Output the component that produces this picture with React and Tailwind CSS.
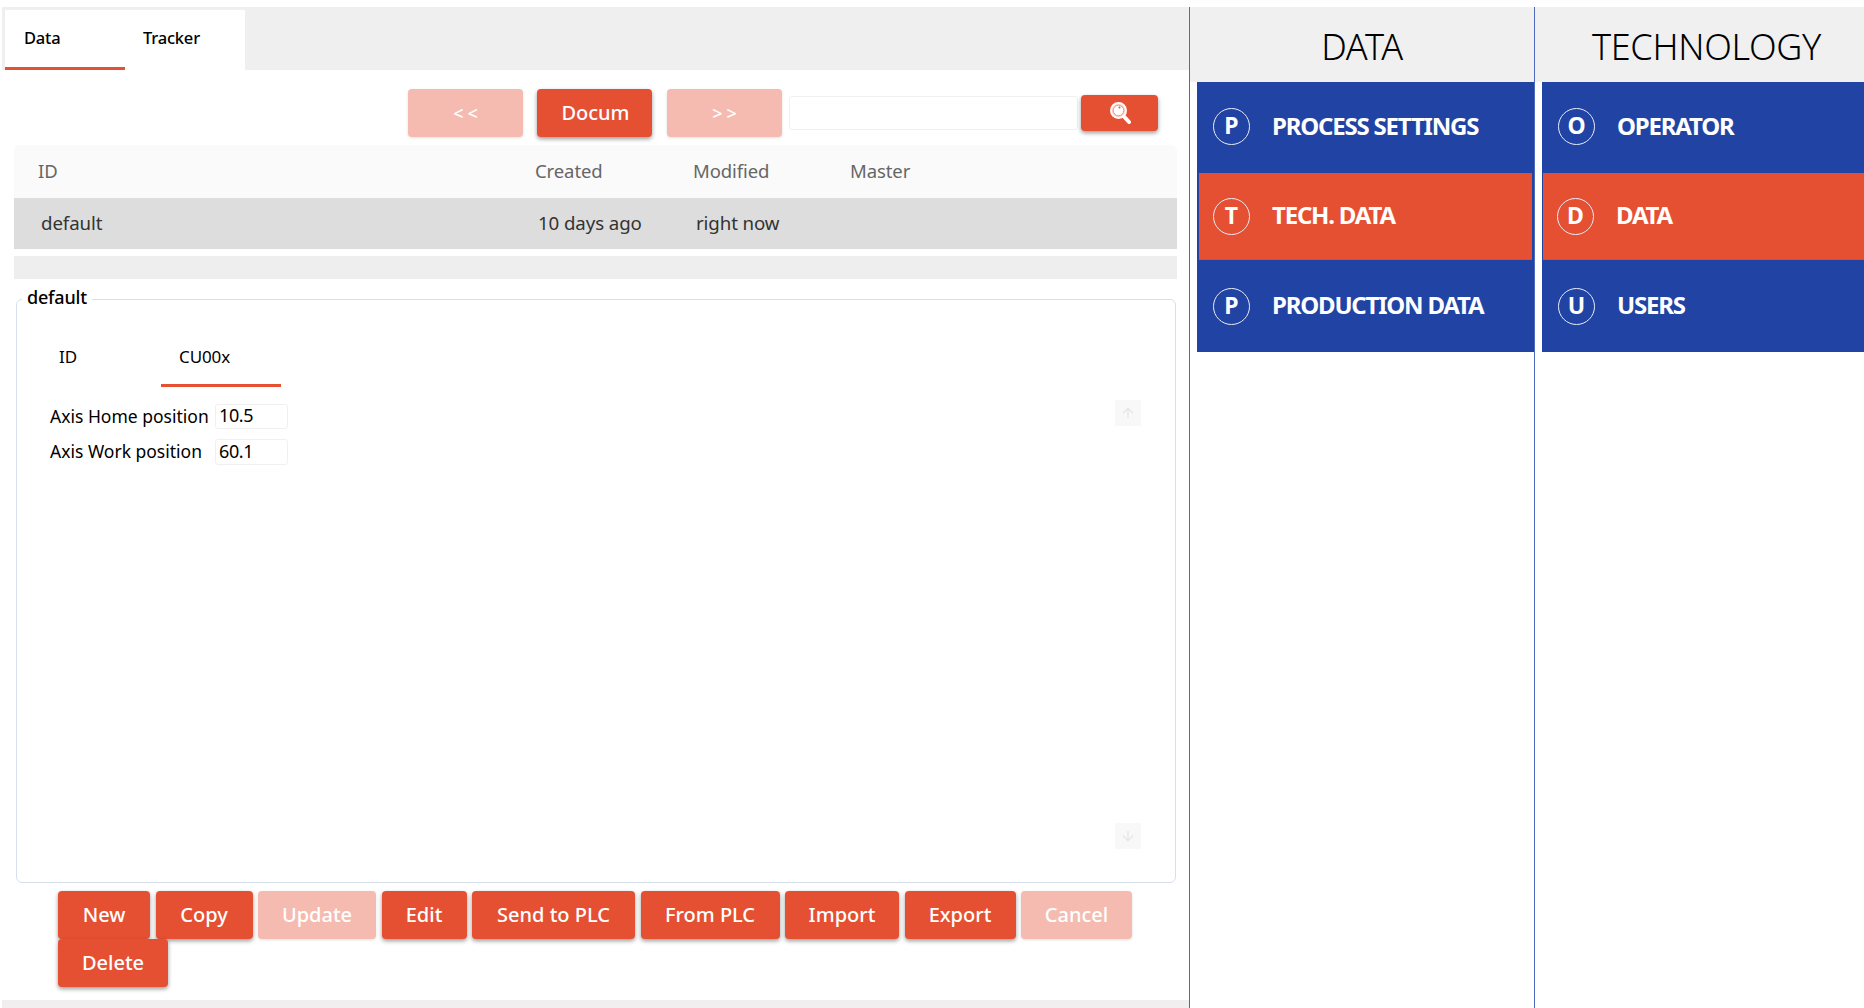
import React from 'react';
import { ArrowUp, ArrowDown } from 'lucide-react';

const font = 'font-["Noto_Sans","Open_Sans",sans-serif]';

const actions = [
    { label: 'New', width: 'w-[92px]' },
    { label: 'Copy', width: 'w-[97px]' },
    { label: 'Update', width: 'w-[118px]', disabled: true },
    { label: 'Edit', width: 'w-[85px]' },
    { label: 'Send to PLC', width: 'w-[163px]' },
    { label: 'From PLC', width: 'w-[139px]' },
    { label: 'Import', width: 'w-[114px]' },
    { label: 'Export', width: 'w-[111px]' },
    { label: 'Cancel', width: 'w-[111px]', disabled: true },
    { label: 'Delete', width: 'w-[110px]' },
];

const menus = [
    {
        title: 'DATA',
        listClass: 'ml-[7px]',
        activeClass: 'mx-[2px]',
        items: [
            { letter: 'P', label: 'PROCESS SETTINGS', rowClass: 'pb-[2px]' },
            { letter: 'T', label: 'TECH. DATA', active: true },
            { letter: 'P', label: 'PRODUCTION DATA' },
        ],
    },
    {
        title: 'TECHNOLOGY',
        titleClass: 'pl-[14px]',
        listClass: 'ml-[7px]',
        activeClass: 'ml-[1px]',
        items: [
            { letter: 'O', label: 'OPERATOR', rowClass: 'pb-[2px]' },
            { letter: 'D', label: 'DATA', active: true },
            { letter: 'U', label: 'USERS' },
        ],
    },
];

const Btn = ({ children, disabled, className = '' }) => (
    <button
        className={`h-[48px] flex items-center justify-center rounded-[4px] text-white text-[20px] font-medium ${disabled ? 'bg-[#f5bbb0] shadow-[0_1px_3px_rgba(0,0,0,0.12)]' : 'bg-[#e65032] shadow-[0_2px_4px_rgba(0,0,0,0.4)]'} ${className}`}
    >
        {children}
    </button>
);

const SearchIcon = () => (
    <svg width="22" height="24" viewBox="0 0 22 24" fill="none">
        <circle cx="9.5" cy="9.5" r="7.5" fill="#f9c4b8" stroke="white" strokeWidth="2" />
        <circle cx="9.5" cy="9.5" r="5.2" fill="#fff" stroke="#f08d78" strokeWidth="0.8" />
        <circle cx="10.5" cy="6.5" r="1" fill="#e65032" />
        <path d="M15 15.5 L20 21" stroke="white" strokeWidth="4" strokeLinecap="round" />
    </svg>
);

const App = () => {
    return (
        <div className={`${font} w-[1864px] h-[1008px] overflow-hidden bg-white pt-[7px] flex`}>
            {/* Left panel */}
            <div className="w-[1189px] pl-[2px] flex flex-col shrink-0">
                <div className="h-[63px] bg-[#efefef] pt-[3px] pl-[3px] flex shrink-0">
                    <div className="w-[120px] bg-white border-b-[3px] border-[#e65032] pl-[19px] flex items-center text-[16.5px] font-medium text-black tracking-[-0.2px]">Data</div>
                    <div className="w-[120px] bg-white pl-[18px] pb-[3px] flex items-center text-[16.5px] font-medium text-black tracking-[-0.2px]">Tracker</div>
                </div>

                <div className="mt-[19px] pl-[406px] flex items-center shrink-0">
                    <Btn disabled className="w-[115px] pl-[4px] tracking-[4px] !text-[18px]">{'<<'}</Btn>
                    <Btn className="w-[115px] ml-[14px] pl-[2px]">Docum</Btn>
                    <Btn disabled className="w-[115px] ml-[15px] pl-[4px] tracking-[4px] !text-[18px]">{'>>'}</Btn>
                    <div className="w-[289px] h-[34px] ml-[7px] bg-white border border-[#f0f0f0] rounded-[3px]" />
                    <button className="w-[77px] h-[36px] ml-[3px] bg-[#e65032] rounded-[4px] shadow-[0_2px_4px_rgba(0,0,0,0.4)] flex items-center justify-center">
                        <SearchIcon />
                    </button>
                </div>

                <div className="mt-[8px] ml-[12px] w-[1163px] shrink-0">
                    <div className="h-[53px] pb-[2px] bg-[#fafafa] rounded-t-[6px] pl-[24px] grid grid-cols-[497px_158px_157px_1fr] items-center text-[18.5px] text-[#666] tracking-[-0.1px]">
                        <span>ID</span>
                        <span>Created</span>
                        <span>Modified</span>
                        <span>Master</span>
                    </div>
                    <div className="h-[51px] bg-[#dddddd] pl-[27px] grid grid-cols-[497px_158px_157px_1fr] items-center text-[18.7px] text-[#333] tracking-[-0.1px]">
                        <span>default</span>
                        <span>10 days ago</span>
                        <span>right now</span>
                        <span />
                    </div>
                    <div className="h-[23px] mt-[7px] bg-[#eeeeee]" />
                </div>

                <fieldset className="mt-[8px] ml-[14px] w-[1160px] h-[596px] border border-[#d5e0ea] rounded-[6px] shrink-0">
                    <legend className="ml-[5px] px-[5px] h-[24px] text-[18px] leading-[20px] font-medium text-black tracking-[-0.2px]">default</legend>
                    <div className="flex w-full h-[570px]">
                        <div className="flex-1 pl-[24px] pt-[18px]">
                            <div className="flex h-[58px] text-[17px] text-black tracking-[-0.1px]">
                                <div className="w-[120px] pl-[18px] pb-[3px] flex items-center">ID</div>
                                <div className="w-[120px] pl-[18px] border-b-[3px] border-[#e65032] flex items-center">CU00x</div>
                            </div>
                            <div className="mt-[17px] pl-[9px] flex flex-col gap-[10px] text-black">
                                <div className="h-[25px] flex items-center">
                                    <span className="w-[165px] pb-[2px] text-[17.5px] leading-[22px] whitespace-nowrap">Axis Home position</span>
                                    <div className="w-[73px] h-[25px] pb-[2px] border border-[#f0f0f0] rounded-[3px] pl-[3px] flex items-center text-[18px] tracking-[-0.4px]">10.5</div>
                                </div>
                                <div className="h-[26px] flex items-center">
                                    <span className="w-[165px] pb-[2px] text-[17.5px] leading-[22px] whitespace-nowrap">Axis Work position</span>
                                    <div className="w-[73px] h-[26px] pb-[2px] border border-[#f0f0f0] rounded-[3px] pl-[3px] flex items-center text-[18px] tracking-[-0.4px]">60.1</div>
                                </div>
                            </div>
                        </div>
                        <div className="w-[26px] mr-[34px] pt-[89px] pb-[32px] flex flex-col justify-between">
                            <div className="h-[26px] bg-[#f8f8f8] flex items-center justify-center text-[#e6e6e6]"><ArrowUp size={16} /></div>
                            <div className="h-[26px] bg-[#f8f8f8] flex items-center justify-center text-[#e6e6e6]"><ArrowDown size={16} /></div>
                        </div>
                    </div>
                </fieldset>

                <div className="mt-[8px] pl-[56px] w-[1140px] flex flex-wrap gap-x-[5.5px] shrink-0">
                    {actions.map((a) => (
                        <Btn key={a.label} disabled={a.disabled} className={a.width}>{a.label}</Btn>
                    ))}
                </div>

                <div className="mt-[13px] flex-1 bg-[#f0eeee]" />
            </div>

            {/* Menu columns */}
            {menus.map((menu, i) => (
                <div key={menu.title} className={`border-l border-[#4f69bd] flex flex-col ${i === 0 ? 'w-[345px]' : 'flex-1'}`}>
                    <div className={`h-[75px] pt-[4px] bg-[#f0f0f0] flex items-center justify-center text-[36px] font-light text-black tracking-[-0.3px] ${menu.titleClass || ''}`}>
                        {menu.title}
                    </div>
                    <div className={`bg-[#2144a4] flex flex-col ${menu.listClass}`}>
                        {menu.items.map((item) => (
                            <div
                                key={item.label}
                                className={`flex items-center text-white ${item.active ? `h-[87px] bg-[#e65032] border-b border-[#c9503f] ${menu.activeClass} pl-[14px]` : `h-[91px] last:h-[92px] pl-[16px]`} ${item.rowClass || ''}`}
                            >
                                <div className="w-[37px] h-[37px] pb-[2px] rounded-full border-[1.5px] border-[#e8ecf6] flex items-center justify-center text-[23px] font-bold shrink-0">
                                    {item.letter}
                                </div>
                                <span className="ml-[22px] pb-[2px] text-[24px] font-bold tracking-[-1.2px] whitespace-nowrap">{item.label}</span>
                            </div>
                        ))}
                    </div>
                </div>
            ))}
        </div>
    );
};

export default App;
